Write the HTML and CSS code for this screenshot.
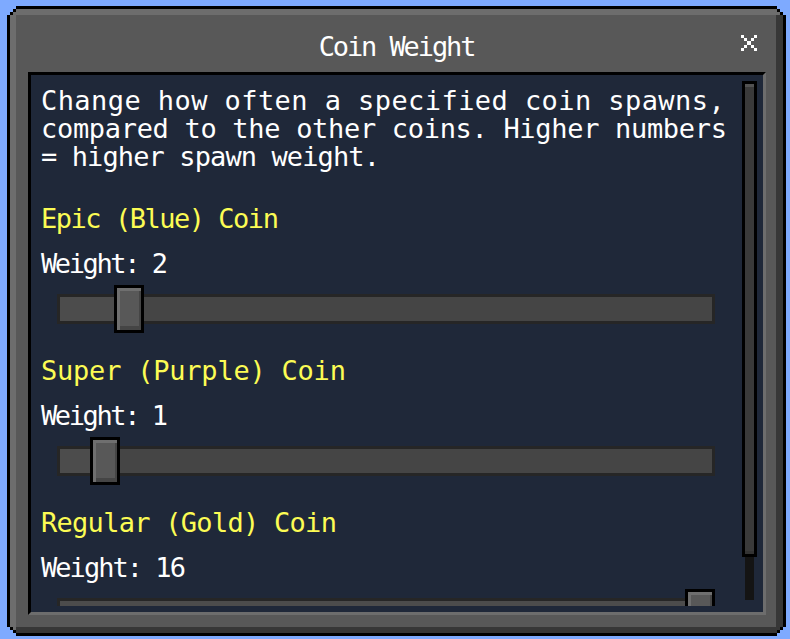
FILE: index.html
```html
<!DOCTYPE html>
<html lang="en">
<head>
<meta charset="utf-8">
<title>Coin Weight</title>
<link rel="stylesheet" href="styles.css">
</head>
<body>
<div class="window">
  <div class="frame">
    <header class="header">
      <span class="spacer"></span>
      <h1 class="title">Coin Weight</h1>
      <button class="close" aria-label="Close">
        <svg width="16" height="16" viewBox="0 0 5 5" shape-rendering="crispEdges" aria-hidden="true">
          <path fill="#ffffff" d="M0 0h1v1H0zM4 0h1v1H4zM1 1h1v1H1zM3 1h1v1H3zM2 2h1v1H2zM1 3h1v1H1zM3 3h1v1H3zM0 4h1v1H0zM4 4h1v1H4z"/>
        </svg>
      </button>
    </header>
    <div class="panel">
      <div class="content">
        <p class="desc">
          <span class="line l1">Change how often a specified coin spawns,</span>
          <span class="line l2">compared to the other coins. Higher numbers</span>
          <span class="line l3">= higher spawn weight.</span>
        </p>

        <section class="setting">
          <h2 class="name n-epic">Epic (Blue) Coin</h2>
          <div class="value v-1">Weight: 2</div>
          <div class="slider">
            <div class="track"><div class="fill" style="width:69px"></div></div>
            <div class="knob" style="left:57px"></div>
          </div>
        </section>

        <section class="setting">
          <h2 class="name n-super">Super (Purple) Coin</h2>
          <div class="value v-1">Weight: 1</div>
          <div class="slider">
            <div class="track"><div class="fill" style="width:45px"></div></div>
            <div class="knob" style="left:33px"></div>
          </div>
        </section>

        <section class="setting">
          <h2 class="name n-regular">Regular (Gold) Coin</h2>
          <div class="value v-2">Weight: 16</div>
          <div class="slider">
            <div class="track"><div class="fill" style="width:100%"></div></div>
            <div class="knob" style="left:628px"></div>
          </div>
        </section>
      </div>
      <div class="scrollbar">
        <div class="scroll-track"></div>
        <div class="scroll-thumb"></div>
      </div>
    </div>
  </div>
</div>
</body>
</html>
```

FILE: styles.css
```css
* { box-sizing: border-box; }

html, body {
  margin: 0;
  padding: 0;
}

body {
  background: #7eaaff;
  width: 790px;
  height: 639px;
  overflow: hidden;
  font-family: "DejaVu Sans Mono", "Liberation Mono", monospace;
  font-size: 27px;
  line-height: 28px;
  color: #ffffff;
}

.window {
  margin: 6px 0 0 7px;
  width: 779px;
  height: 630px;
  padding: 3px;
  background: #000000;
  clip-path: polygon(
    9px 0, calc(100% - 9px) 0, calc(100% - 9px) 3px, calc(100% - 6px) 3px,
    calc(100% - 6px) 6px, calc(100% - 3px) 6px, calc(100% - 3px) 9px, 100% 9px,
    100% calc(100% - 9px), calc(100% - 3px) calc(100% - 9px), calc(100% - 3px) calc(100% - 6px),
    calc(100% - 6px) calc(100% - 6px), calc(100% - 6px) calc(100% - 3px), calc(100% - 9px) calc(100% - 3px),
    calc(100% - 9px) 100%, 9px 100%, 9px calc(100% - 3px), 6px calc(100% - 3px),
    6px calc(100% - 6px), 3px calc(100% - 6px), 3px calc(100% - 9px), 0 calc(100% - 9px),
    0 9px, 3px 9px, 3px 6px, 6px 6px, 6px 3px, 9px 3px);
}

.frame {
  height: 100%;
  display: flex;
  flex-direction: column;
  padding: 0 17px 18px 18px;
  background: #585858;
  box-shadow: inset 6px 6px 0 #6d6d6d, inset -7px -6px 0 #373737;
  clip-path: polygon(
    6px 0, calc(100% - 6px) 0, calc(100% - 6px) 3px, calc(100% - 3px) 3px,
    calc(100% - 3px) 6px, 100% 6px, 100% calc(100% - 6px), calc(100% - 3px) calc(100% - 6px),
    calc(100% - 3px) calc(100% - 3px), calc(100% - 6px) calc(100% - 3px), calc(100% - 6px) 100%,
    6px 100%, 6px calc(100% - 3px), 3px calc(100% - 3px), 3px calc(100% - 6px), 0 calc(100% - 6px),
    0 6px, 3px 6px, 3px 3px, 6px 3px);
}

.header {
  height: 63px;
  flex: none;
  display: grid;
  grid-template-columns: 1fr auto 1fr;
  align-items: start;
  padding: 24px 9px 0 8px;
}

.title {
  margin: 0;
  font-size: 27px;
  font-weight: normal;
  line-height: 28px;
  letter-spacing: -2.1px;
  color: #ffffff;
  white-space: nowrap;
}

.close {
  justify-self: end;
  margin: 2px 0 0 0;
  padding: 0;
  width: 16px;
  height: 16px;
  border: 0;
  background: transparent;
  display: flex;
}

.panel {
  flex: 1;
  min-height: 0;
  display: flex;
  padding: 6px 6px 6px 0;
  background: #1f2839;
  border: 3px solid;
  border-color: #000000 #6d6d6d #6d6d6d #000000;
}

.content {
  flex: 1;
  min-width: 0;
  overflow: hidden;
  padding: 6px 0 0 10px;
}

.desc {
  margin: 0 0 34px 0;
}

.line {
  display: block;
  white-space: nowrap;
}

.l1 { letter-spacing: 0.43px; }
.l2 { letter-spacing: -0.31px; }
.l3 { letter-spacing: -0.89px; }

.setting {
  margin-bottom: 24px;
}

.name {
  margin: 0 0 17px 0;
  font-size: 27px;
  font-weight: normal;
  line-height: 28px;
  color: #fcfc54;
  white-space: nowrap;
}

.n-epic { letter-spacing: -1.48px; }
.n-super { letter-spacing: -0.22px; }
.n-regular { letter-spacing: -0.72px; }

.value {
  margin: 0 0 7px 0;
  white-space: nowrap;
}

.v-1 { letter-spacing: -2.4px; }
.v-2 { letter-spacing: -1.96px; }

.slider {
  position: relative;
  height: 48px;
  width: 658px;
  margin-left: 16px;
  padding-top: 9px;
}

.track {
  height: 30px;
  border: 3px solid #262626;
  background: #454545;
}

.fill {
  height: 100%;
  background: #4c4c4c;
}

.knob {
  position: absolute;
  top: 0;
  width: 30px;
  height: 48px;
  border: 3px solid #000000;
  background: #585858;
  box-shadow: inset 3px 3px 0 #6f6f6f, inset -2px -4px 0 #454545;
}

.scrollbar {
  position: relative;
  flex: none;
  width: 15px;
  margin-bottom: 6px;
}

.scroll-track {
  position: absolute;
  top: 3px;
  bottom: 0;
  left: 3px;
  right: 3px;
  background: #141414;
}

.scroll-thumb {
  position: relative;
  height: 476px;
  border: 3px solid #000000;
  background: #3a3a3a;
  box-shadow: inset 0 3px 0 #525252, inset 0 -3px 0 #333333;
}
```
